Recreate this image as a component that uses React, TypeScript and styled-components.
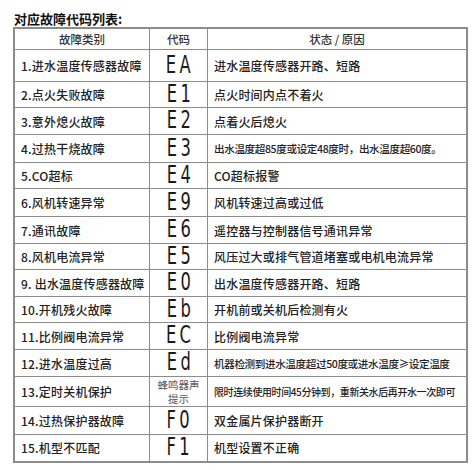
import styled, { createGlobalStyle } from "styled-components";

const GlobalStyle = createGlobalStyle`
  html, body {
    margin: 0;
    padding: 0;
    background: #ffffff;
  }
  body {
    font-family: "Liberation Sans", "Noto Sans CJK SC", sans-serif;
    color: #222;
  }
`;

const Page = styled.div`
  padding: 11px 13px 0 13px;
  width: 449px;
`;

const Title = styled.h1`
  margin: 0 0 0 1px;
  height: 16px;
  line-height: 16px;
  font-size: 13px;
  font-weight: 700;
  color: #111;
  font-family: "Noto Sans CJK SC", sans-serif;
`;

const Table = styled.table`
  border-collapse: collapse;
  width: 449px;
  table-layout: fixed;
  border: 2px solid #8c8c8c;
`;

const Head = styled.th<{ $w: number }>`
  width: ${(p) => p.$w}px;
  height: 20px;
  padding: 0;
  border: 1.5px solid #8c8c8c;
  font-family: "Noto Sans CJK SC", sans-serif;
  font-size: 11.5px;
  font-weight: 500;
  color: #333;
  text-align: center;
`;

const Row = styled.tr<{ $h: number }>`
  height: ${(p) => p.$h}px;
`;

const Cell = styled.td<{ $size?: number }>`
  padding: 0 0 0 6px;
  border: 1.5px solid #8c8c8c;
  font-family: "Noto Sans CJK SC", sans-serif;
  font-size: ${(p) => p.$size ?? 12}px;
  font-weight: 500;
  color: #222;
  white-space: nowrap;
  overflow: hidden;
  letter-spacing: ${(p) => (p.$size && p.$size < 11 ? "-0.4px" : p.$size ? "-0.2px" : "0.2px")};
`;

const CodeCell = styled.td`
  padding: 0;
  border: 1.5px solid #8c8c8c;
  text-align: center;
  vertical-align: middle;
`;

const Segment = styled.span`
  display: inline-block;
  font-family: "DejaVu Sans", sans-serif;
  font-weight: 400;
  font-size: 24px;
  line-height: 20px;
  letter-spacing: 5px;
  padding-left: 5px;
  color: #1a1a1a;
  transform: scaleX(0.68);
`;

const Note = styled.span`
  display: block;
  font-family: "Noto Sans CJK SC", sans-serif;
  font-size: 10.5px;
  line-height: 14px;
  color: #555;
`;

type Item = { name: string; code: string; desc: string; h: number; size?: number };

const items: Item[] = [
  { name: "1.进水温度传感器故障", code: "EA", desc: "进水温度传感器开路、短路", h: 32 },
  { name: "2.点火失败故障", code: "E1", desc: "点火时间内点不着火", h: 26 },
  { name: "3.意外熄火故障", code: "E2", desc: "点着火后熄火", h: 27 },
  { name: "4.过热干烧故障", code: "E3", desc: "出水温度超85度或设定48度时，出水温度超60度。", h: 28, size: 10.6 },
  { name: "5.CO超标", code: "E4", desc: "CO超标报警", h: 26 },
  { name: "6.风机转速异常", code: "E9", desc: "风机转速过高或过低", h: 28 },
  { name: "7.通讯故障", code: "E6", desc: "遥控器与控制器信号通讯异常", h: 27 },
  { name: "8.风机电流异常", code: "E5", desc: "风压过大或排气管道堵塞或电机电流异常", h: 26 },
  { name: "9. 出水温度传感器故障", code: "E0", desc: "出水温度传感器开路、短路", h: 27 },
  { name: "10.开机残火故障", code: "Eb", desc: "开机前或关机后检测有火", h: 26 },
  { name: "11.比例阀电流异常", code: "EC", desc: "比例阀电流异常", h: 27 },
  { name: "12.进水温度过高", code: "Ed", desc: "机器检测到进水温度超过50度或进水温度≥设定温度", h: 27, size: 10.6 },
  { name: "13.定时关机保护", code: "", desc: "限时连续使用时间45分钟到，重新关水后再开水一次即可", h: 30, size: 10 },
  { name: "14.过热保护器故障", code: "F0", desc: "双金属片保护器断开", h: 28 },
  { name: "15.机型不匹配", code: "F1", desc: "机型设置不正确", h: 27 },
];

export default function App() {
  return (
    <Page>
      <GlobalStyle />
      <Title>对应故障代码列表:</Title>
      <Table>
        <thead>
          <tr>
            <Head $w={134}>故障类别</Head>
            <Head $w={57}>代码</Head>
            <Head $w={258}>状态 / 原因</Head>
          </tr>
        </thead>
        <tbody>
          {items.map((it) => (
            <Row key={it.name} $h={it.h}>
              <Cell>{it.name}</Cell>
              <CodeCell>
                {it.code ? (
                  <Segment>{it.code}</Segment>
                ) : (
                  <Note>
                    蜂鸣器声
                    <br />
                    提示
                  </Note>
                )}
              </CodeCell>
              <Cell $size={it.size}>{it.desc}</Cell>
            </Row>
          ))}
        </tbody>
      </Table>
    </Page>
  );
}
